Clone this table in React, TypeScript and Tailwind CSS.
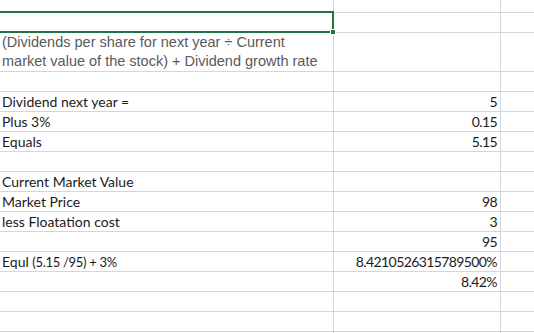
import React from "react";

type Row = { h: string; a?: React.ReactNode; b?: string };

const cal = "font-['Lato','Liberation_Sans',sans-serif] text-[14px] text-[#1b1b1b]";
const num = "text-[12.2px] tracking-[-0.6px]";

const rows: Row[] = [
  { h: "h-[13px]" },
  { h: "h-[20px]" },
  {
    h: "h-[39px]",
    a: (
      <div className="font-['Liberation_Sans',Arial,sans-serif] text-[14.5px] leading-[18.5px] text-[#5a5a5a] pb-[1px]">
        (Dividends per share for next year ÷ Current
        <br />
        market value of the stock) + Dividend growth rate
      </div>
    ),
  },
  { h: "h-[20px]" },
  { h: "h-[20px]", a: "Dividend next year =", b: "5" },
  { h: "h-[20px]", a: "Plus 3%", b: "0.15" },
  { h: "h-[20px]", a: "Equals", b: "5.15" },
  { h: "h-[20px]" },
  { h: "h-[20px]", a: "Current Market Value" },
  { h: "h-[20px]", a: "Market Price", b: "98" },
  { h: "h-[20px]", a: "less Floatation cost", b: "3" },
  { h: "h-[20px]", b: "95" },
  {
    h: "h-[20px]",
    a: (
      <span className={`${cal} leading-[18px] whitespace-nowrap`}>
        Equl <span className="text-[13px] tracking-[-0.3px]">(5.15 /95) + 3%</span>
      </span>
    ),
    b: "8.4210526315789500%",
  },
  { h: "h-[20px]", b: "8.42%" },
  { h: "h-[20px]" },
  { h: "h-[20px]" },
  { h: "h-[20px]" },
];

export default function App() {
  return (
    <div className="relative w-[534px] h-[333px] overflow-hidden bg-white">
      {rows.map((r, i) => (
        <div key={i} className={`flex ${r.h} border-b border-[#d6d6d6]`}>
          <div className="w-[334px] shrink-0 border-r border-[#d6d6d6] flex items-end pl-[2px]">
            {typeof r.a === "string" ? (
              <span className={`${cal} leading-[18px] whitespace-nowrap`}>{r.a}</span>
            ) : (
              r.a
            )}
          </div>
          <div className="w-[167px] shrink-0 border-r border-[#d6d6d6] flex items-end justify-end pr-[3px]">
            {r.b && <span className={`${cal} ${num} leading-[18px] whitespace-nowrap`}>{r.b}</span>}
          </div>
          <div className="flex-1" />
        </div>
      ))}
      <div className="absolute left-[-3px] top-[11px] w-[337px] h-[22px] border-2 border-[#217346]" />
      <div className="absolute left-[330px] top-[29px] w-[6px] h-[6px] bg-[#217346] border border-white" />
    </div>
  );
}
